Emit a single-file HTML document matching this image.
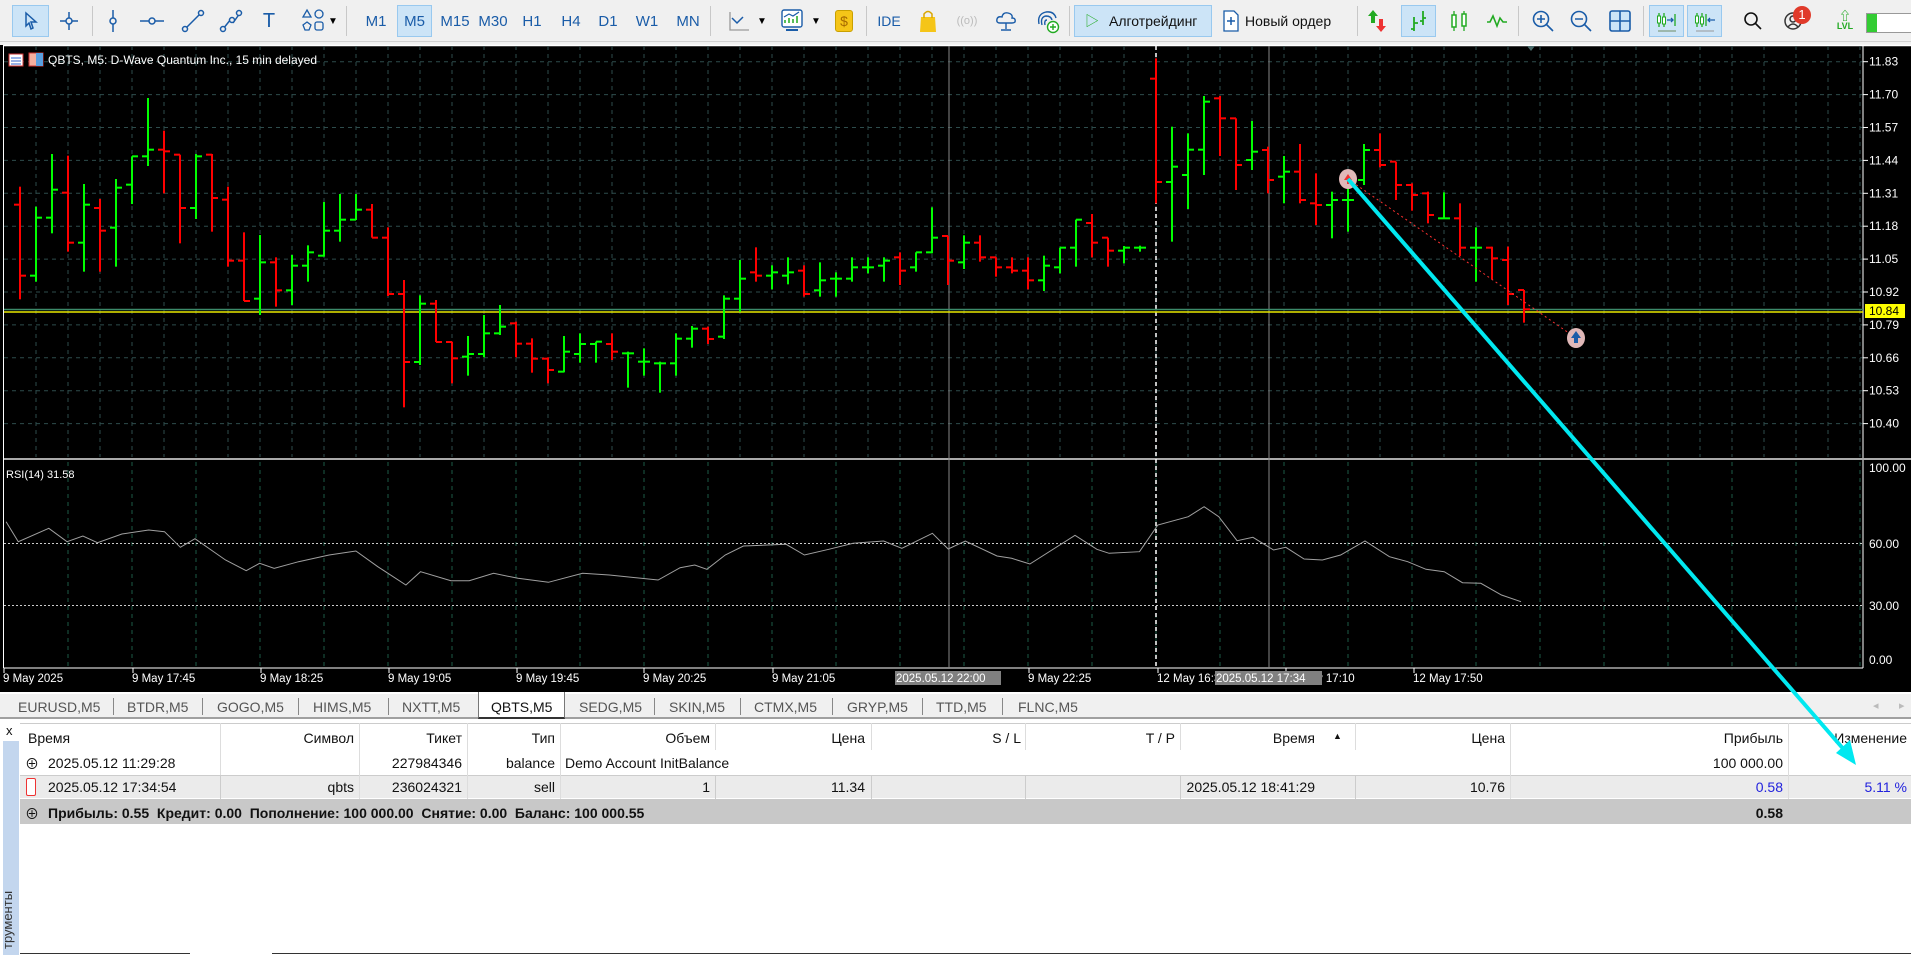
<!DOCTYPE html>
<html><head><meta charset="utf-8">
<style>
*{margin:0;padding:0;box-sizing:border-box}
body{width:1911px;height:955px;overflow:hidden;background:#fff;font-family:"Liberation Sans","Noto Sans CJK SC",sans-serif;position:relative}
#tb{position:absolute;left:0;top:0;width:1911px;height:42px;background:#f0f0f0;border-bottom:1px solid #d0d0d0}
#tb .i{position:absolute;top:0;height:42px;display:flex;align-items:center;justify-content:center;font-size:15px;color:#1a5ca8}
.sel{background:#cce4f7;border:1px solid #99c9ef}
.sep{position:absolute;top:6px;width:1px;height:30px;background:#c8c8c8}
#chart{position:absolute;left:0;top:42px}
#ov{position:absolute;left:0;top:0;z-index:10;pointer-events:none}
#tabs{position:absolute;left:0;top:692px;width:1911px;height:27px;background:#f0f0f0;border-top:2px solid #fff;border-bottom:2px solid #a0a0a0}
#tabs span{position:absolute;top:5px;font-size:14px;color:#555}
#tabs i{position:absolute;top:4px;width:1px;height:17px;background:#888}
#tbl{position:absolute;left:0;top:721px;width:1911px;height:234px;background:#fff}
.c{position:absolute;font-size:14px;color:#111;white-space:nowrap}
.r{text-align:right}
.vs{position:absolute;width:1px;background:#ddd}
</style></head><body>
<div id="tb">
  <div class="i sel" style="left:12px;width:37px;top:5px;height:32px"><svg width="20" height="20" viewBox="0 0 20 20"><path d="M5 2 L15 11 L10 11 L12 17 L10 18 L8 12 L5 15 Z" fill="none" stroke="#1a5ca8" stroke-width="1.5"/></svg></div>
  <div class="i" style="left:56px;width:26px"><svg width="22" height="22"><path d="M11 2V20M2 11H20" stroke="#1a5ca8" stroke-width="1.5"/><circle cx="11" cy="11" r="3" fill="#f0f0f0" stroke="#1a5ca8" stroke-width="1.5"/></svg></div>
  <div class="sep" style="left:92px"></div>
  <div class="i" style="left:103px;width:20px"><svg width="12" height="24"><path d="M6 1V23" stroke="#1a5ca8" stroke-width="1.5"/><circle cx="6" cy="12" r="3" fill="#f0f0f0" stroke="#1a5ca8" stroke-width="1.5"/></svg></div>
  <div class="i" style="left:140px;width:24px"><svg width="24" height="12"><path d="M0 6H24" stroke="#1a5ca8" stroke-width="1.5"/><circle cx="12" cy="6" r="3" fill="#f0f0f0" stroke="#1a5ca8" stroke-width="1.5"/></svg></div>
  <div class="i" style="left:180px;width:26px"><svg width="24" height="24"><path d="M3 21L21 3" stroke="#1a5ca8" stroke-width="1.5"/><circle cx="4" cy="20" r="2.5" fill="#f0f0f0" stroke="#1a5ca8" stroke-width="1.5"/><circle cx="20" cy="4" r="2.5" fill="#f0f0f0" stroke="#1a5ca8" stroke-width="1.5"/></svg></div>
  <div class="i" style="left:218px;width:26px"><svg width="24" height="24"><path d="M4 20L12 10M14 14L21 4" stroke="#1a5ca8" stroke-width="1.5"/><circle cx="4" cy="20" r="2.5" fill="#f0f0f0" stroke="#1a5ca8" stroke-width="1.5"/><circle cx="13" cy="11" r="2.5" fill="#f0f0f0" stroke="#1a5ca8" stroke-width="1.5"/><circle cx="20" cy="4" r="2.5" fill="#f0f0f0" stroke="#1a5ca8" stroke-width="1.5"/></svg></div>
  <div class="i" style="left:259px;width:20px;font-size:20px;color:#1a5ca8">T</div>
  <div class="i" style="left:298px;width:30px"><svg width="24" height="26"><path d="M6 2L10 9H2Z" fill="none" stroke="#1a5ca8" stroke-width="1.3"/><circle cx="18" cy="6" r="4" fill="none" stroke="#1a5ca8" stroke-width="1.3"/><path d="M6 14L10 17L8 22H4L2 17Z" fill="none" stroke="#1a5ca8" stroke-width="1.3"/><rect x="14" y="14" width="8" height="8" rx="2" fill="none" stroke="#1a5ca8" stroke-width="1.3"/></svg></div>
  <div class="i" style="left:328px;width:10px;font-size:10px;color:#000">▼</div>
  <div class="sep" style="left:346px"></div>
  <div class="i" style="left:365px;width:22px">M1</div>
  <div class="i sel" style="left:397px;width:35px;top:5px;height:32px">M5</div>
  <div class="i" style="left:440px;width:30px">M15</div>
  <div class="i" style="left:478px;width:30px">M30</div>
  <div class="i" style="left:522px;width:20px">H1</div>
  <div class="i" style="left:561px;width:20px">H4</div>
  <div class="i" style="left:598px;width:20px">D1</div>
  <div class="i" style="left:636px;width:22px">W1</div>
  <div class="i" style="left:676px;width:24px">MN</div>
  <div class="sep" style="left:710px"></div>
  <div class="i" style="left:728px;width:22px"><svg width="22" height="22"><path d="M2 2V20H21" stroke="#999" stroke-width="1.3" fill="none"/><path d="M4 8L9 13L15 7" stroke="#1a5ca8" stroke-width="1.5" fill="none"/></svg></div>
  <div class="i" style="left:757px;width:10px;font-size:10px;color:#000">▼</div>
  <div class="i" style="left:780px;width:24px"><svg width="24" height="26"><rect x="2" y="2" width="20" height="17" rx="2" fill="#fff" stroke="#1a5ca8" stroke-width="1.4"/><path d="M5 15V12M9 15V10M13 15V11M17 15V8" stroke="#2a2" stroke-width="1.5"/><path d="M4 9L9 6L13 8L19 4" stroke="#1a5ca8" stroke-width="1.2" fill="none"/><path d="M6 22H18" stroke="#1a5ca8" stroke-width="2"/></svg></div>
  <div class="i" style="left:811px;width:10px;font-size:10px;color:#000">▼</div>
  <div class="i" style="left:834px;width:20px"><div style="width:18px;height:22px;background:#f5c518;border:1px solid #c9a000;border-radius:3px;color:#a66a00;font-size:14px;text-align:center;line-height:20px">$</div></div>
  <div class="sep" style="left:866px"></div>
  <div class="i" style="left:877px;width:24px;font-size:14px">IDE</div>
  <div class="i" style="left:918px;width:20px"><svg width="18" height="24"><path d="M2 8H16L17 23H1Z" fill="#f5c518"/><path d="M5 9V5Q9 0 13 5V9" stroke="#d9a500" stroke-width="1.5" fill="none"/></svg></div>
  <div class="i" style="left:956px;width:22px;color:#bbb;font-size:11px">((o))</div>
  <div class="i" style="left:994px;width:24px"><svg width="24" height="24"><path d="M6 14Q2 14 3 10Q4 7 8 8Q9 3 14 4Q19 5 18 9Q22 9 21 13Q20 14 18 14Z" fill="none" stroke="#1a5ca8" stroke-width="1.4"/><path d="M12 14V20M7 21H17" stroke="#1a5ca8" stroke-width="1.4"/></svg></div>
  <div class="i" style="left:1035px;width:26px"><svg width="26" height="26"><path d="M4 16Q2 6 11 4Q19 3 21 10M7 17Q5 9 11 8Q16 8 17 12M10 17Q9 12 12 12" fill="none" stroke="#1a5ca8" stroke-width="1.4"/><circle cx="18" cy="19" r="5.5" fill="#fff" stroke="#2a2" stroke-width="1.4"/><path d="M18 16V22M15 19H21" stroke="#2a2" stroke-width="1.4"/></svg></div>
  <div class="sep" style="left:1069px"></div>
  <div class="i sel" style="left:1074px;width:138px;top:5px;height:32px;color:#111;font-size:14px;justify-content:flex-start;padding-left:10px"><span style="color:#2a2;font-size:14px;margin-right:10px">▷</span>Алготрейдинг</div>
  <div class="i" style="left:1223px;width:125px;color:#111;font-size:14px;justify-content:flex-start"><svg width="16" height="22" style="margin-right:6px"><path d="M1 1H11L15 5V21H1Z" fill="#fff" stroke="#1a5ca8" stroke-width="1.3"/><path d="M8 7V15M4 11H12" stroke="#1a5ca8" stroke-width="1.5"/></svg>Новый ордер</div>
  <div class="sep" style="left:1357px"></div>
  <div class="i" style="left:1366px;width:22px"><svg width="20" height="24"><path d="M6 1L1 7H4V14H8V7H11Z" fill="#2a2"/><path d="M14 23L9 17H12V10H16V17H19Z" fill="#e33"/></svg></div>
  <div class="i sel" style="left:1401px;width:35px;top:5px;height:32px"><svg width="20" height="24"><path d="M5 8V22M9 14H5M2 20H5M14 2V16M14 9H17M11 12H14" stroke="#2a2" stroke-width="1.8" fill="none"/></svg></div>
  <div class="i" style="left:1448px;width:22px"><svg width="20" height="24"><path d="M5 2V22M15 2V22" stroke="#2a2" stroke-width="1.3"/><rect x="3" y="6" width="4" height="12" fill="#fff" stroke="#2a2" stroke-width="1.5"/><rect x="13" y="5" width="4" height="12" fill="#fff" stroke="#2a2" stroke-width="1.5"/></svg></div>
  <div class="i" style="left:1485px;width:24px"><svg width="22" height="14"><path d="M1 8H4L7 2L11 12L14 4L17 8H21" stroke="#2a2" stroke-width="1.6" fill="none"/></svg></div>
  <div class="sep" style="left:1518px"></div>
  <div class="i" style="left:1530px;width:26px"><svg width="24" height="24"><circle cx="10" cy="10" r="7.5" fill="none" stroke="#1a5ca8" stroke-width="1.6"/><path d="M15.5 15.5L22 22M10 6V14M6 10H14" stroke="#1a5ca8" stroke-width="1.6"/></svg></div>
  <div class="i" style="left:1568px;width:26px"><svg width="24" height="24"><circle cx="10" cy="10" r="7.5" fill="none" stroke="#1a5ca8" stroke-width="1.6"/><path d="M15.5 15.5L22 22M6 10H14" stroke="#1a5ca8" stroke-width="1.6"/></svg></div>
  <div class="i" style="left:1608px;width:24px"><svg width="22" height="22"><rect x="1" y="1" width="20" height="20" rx="2" fill="#cce4f7" stroke="#1a5ca8" stroke-width="1.6"/><path d="M11 1V21M1 11H21" stroke="#1a5ca8" stroke-width="1.6"/></svg></div>
  <div class="sep" style="left:1643px"></div>
  <div class="i sel" style="left:1649px;width:35px;top:5px;height:32px"><svg width="24" height="24"><path d="M4 4V18M9 4V18M20 5V17M3 22H21" stroke="#2a2" stroke-width="1.3"/><rect x="2.5" y="7" width="3" height="7" fill="#fff" stroke="#2a2"/><rect x="7.5" y="8" width="3" height="7" fill="#fff" stroke="#2a2"/><path d="M12 11H18M16 9L18 11L16 13" stroke="#1a5ca8" stroke-width="1.3" fill="none"/><path d="M3 22H21" stroke="#999"/></svg></div>
  <div class="i sel" style="left:1687px;width:35px;top:5px;height:32px"><svg width="24" height="24"><path d="M4 4V18M9 4V18M13 5V17" stroke="#2a2" stroke-width="1.3"/><rect x="2.5" y="7" width="3" height="7" fill="#fff" stroke="#2a2"/><rect x="7.5" y="8" width="3" height="7" fill="#fff" stroke="#2a2"/><path d="M15 11H22M17 9L15 11L17 13" stroke="#1a5ca8" stroke-width="1.3" fill="none"/><path d="M3 22H21" stroke="#999"/></svg></div>
  <div class="i" style="left:1742px;width:22px"><svg width="20" height="20"><circle cx="8" cy="8" r="6" fill="none" stroke="#111" stroke-width="1.6"/><path d="M12.5 12.5L18 18" stroke="#111" stroke-width="1.6"/></svg></div>
  <div class="i" style="left:1782px;width:24px"><svg width="22" height="22"><circle cx="10" cy="11" r="8" fill="none" stroke="#333" stroke-width="1.5"/><circle cx="10" cy="9" r="3" fill="none" stroke="#333" stroke-width="1.5"/><path d="M5 17Q10 11 15 17" fill="none" stroke="#333" stroke-width="1.5"/></svg></div>
  <div style="position:absolute;left:1793px;top:6px;width:18px;height:18px;border-radius:9px;background:#e03a2a;color:#fff;font-size:13px;text-align:center;line-height:18px">1</div>
  <div class="i" style="left:1834px;width:22px;flex-direction:column;color:#2a2;font-size:9px;font-weight:bold"><span style="font-size:12px;line-height:10px">⇧</span>LVL</div>
  <div style="position:absolute;left:1866px;top:13px;width:46px;height:20px;background:#fff;border:1px solid #999"><div style="width:10px;height:18px;background:#3c3"></div></div>
</div>

<svg id="chart" width="1911" height="650" viewBox="0 42 1911 650"></svg>

<div id="tabs">
  <span style="left:18px">EURUSD,M5</span><i style="left:113px"></i>
  <span style="left:127px">BTDR,M5</span><i style="left:202px"></i>
  <span style="left:217px">GOGO,M5</span><i style="left:298px"></i>
  <span style="left:313px">HIMS,M5</span><i style="left:388px"></i>
  <span style="left:402px">NXTT,M5</span>
  <div style="position:absolute;left:478px;top:-2px;width:87px;height:27px;background:#fff;border:1px solid #777;border-top:none;border-bottom:2px solid #333"></div>
  <span style="left:491px;color:#111">QBTS,M5</span>
  <span style="left:579px">SEDG,M5</span><i style="left:654px"></i>
  <span style="left:669px">SKIN,M5</span><i style="left:740px"></i>
  <span style="left:754px">CTMX,M5</span><i style="left:832px"></i>
  <span style="left:847px">GRYP,M5</span><i style="left:922px"></i>
  <span style="left:936px">TTD,M5</span><i style="left:1002px"></i>
  <span style="left:1018px">FLNC,M5</span>
  <span style="left:1873px;color:#bbb;font-size:11px">◂</span><span style="left:1899px;color:#bbb;font-size:11px">▸</span>
</div>

<div id="tbl">
  <div style="position:absolute;left:3px;top:20px;width:16px;height:214px;background:#c3d6ee"></div>
  <div class="c" style="left:6px;top:2px;font-size:13px">x</div>
  <div style="position:absolute;left:0px;top:228px;transform:rotate(-90deg);transform-origin:left top;font-size:13px;color:#333;white-space:nowrap">трументы</div>
  <div style="position:absolute;left:20px;top:2px;width:1891px;height:1px;background:#ccc"></div>
  <div style="position:absolute;left:20px;top:54px;width:1891px;height:23px;background:#ebebeb;border-top:1px solid #ccc"></div>
  <div style="position:absolute;left:20px;top:78px;width:1891px;height:25px;background:#c8c8c8"></div>
  <div style="position:absolute;left:20px;top:232px;width:170px;height:1px;background:#333"></div>
  <div style="position:absolute;left:272px;top:232px;width:1639px;height:1px;background:#333"></div>
  <div class="vs" style="left:220px;top:2px;height:52px"></div><div class="vs" style="left:359px;top:2px;height:76px"></div>
  <div class="vs" style="left:467px;top:2px;height:76px"></div><div class="vs" style="left:560px;top:2px;height:76px"></div>
  <div class="vs" style="left:715px;top:2px;height:27px"></div><div class="vs" style="left:871px;top:2px;height:27px"></div>
  <div class="vs" style="left:1025px;top:2px;height:27px"></div><div class="vs" style="left:1180px;top:2px;height:27px"></div>
  <div class="vs" style="left:1355px;top:2px;height:27px"></div><div class="vs" style="left:1510px;top:2px;height:76px"></div>
  <div class="vs" style="left:1788px;top:2px;height:76px"></div>
  <div class="vs" style="left:220px;top:54px;height:24px;background:#ccc"></div>
  <div class="vs" style="left:715px;top:54px;height:24px;background:#ccc"></div><div class="vs" style="left:871px;top:54px;height:24px;background:#ccc"></div>
  <div class="vs" style="left:1025px;top:54px;height:24px;background:#ccc"></div><div class="vs" style="left:1180px;top:54px;height:24px;background:#ccc"></div><div class="vs" style="left:1355px;top:54px;height:24px;background:#ccc"></div>
  <div class="c" style="left:28px;top:9px">Время</div>
  <div class="c r" style="right:1557px;top:9px">Символ</div>
  <div class="c r" style="right:1449px;top:9px">Тикет</div>
  <div class="c r" style="right:1356px;top:9px">Тип</div>
  <div class="c r" style="right:1201px;top:9px">Объем</div>
  <div class="c r" style="right:1046px;top:9px">Цена</div>
  <div class="c r" style="right:890px;top:9px">S / L</div>
  <div class="c r" style="right:736px;top:9px">T / P</div>
  <div class="c r" style="right:596px;top:9px">Время</div>
  <div class="c" style="left:1333px;top:10px;font-size:9px">▲</div>
  <div class="c r" style="right:406px;top:9px">Цена</div>
  <div class="c r" style="right:128px;top:9px">Прибыль</div>
  <div class="c r" style="right:4px;top:9px">Изменение</div>
  <div class="c" style="left:25px;top:33px">⊕</div>
  <div class="c" style="left:48px;top:34px">2025.05.12 11:29:28</div>
  <div class="c r" style="right:1449px;top:34px">227984346</div>
  <div class="c r" style="right:1356px;top:34px">balance</div>
  <div class="c" style="left:565px;top:34px">Demo Account InitBalance</div>
  <div class="c r" style="right:128px;top:34px">100 000.00</div>
  <div style="position:absolute;left:26px;top:57px;width:10px;height:18px;border:1.5px solid #e33;border-radius:2px;background:#fff"></div>
  <div class="c" style="left:48px;top:58px">2025.05.12 17:34:54</div>
  <div class="c r" style="right:1557px;top:58px">qbts</div>
  <div class="c r" style="right:1449px;top:58px">236024321</div>
  <div class="c r" style="right:1356px;top:58px">sell</div>
  <div class="c r" style="right:1201px;top:58px">1</div>
  <div class="c r" style="right:1046px;top:58px">11.34</div>
  <div class="c r" style="right:596px;top:58px">2025.05.12 18:41:29</div>
  <div class="c r" style="right:406px;top:58px">10.76</div>
  <div class="c r" style="right:128px;top:58px;color:#22d">0.58</div>
  <div class="c r" style="right:4px;top:58px;color:#22d">5.11 %</div>
  <div class="c" style="left:25px;top:83px">⊕</div>
  <div class="c" style="left:48px;top:84px;font-weight:bold">Прибыль: 0.55&nbsp; Кредит: 0.00&nbsp; Пополнение: 100 000.00&nbsp; Снятие: 0.00&nbsp; Баланс: 100 000.55</div>
  <div class="c r" style="right:128px;top:84px;font-weight:bold">0.58</div>
</div>

<svg id="ov" width="1911" height="955">
  <line x1="1348" y1="179" x2="1846" y2="752" stroke="#00e8f0" stroke-width="4"/>
  <path d="M1856 765L1836 753L1850 740Z" fill="#00e8f0"/>
</svg>

<script>
var S=document.getElementById('chart'),h='';
function L(x1,y1,x2,y2,c,w,d){h+='<line x1="'+x1+'" y1="'+y1+'" x2="'+x2+'" y2="'+y2+'" stroke="'+c+'" stroke-width="'+(w||1)+'"'+(d?' stroke-dasharray="'+d+'"':'')+'/>';}
function T(x,y,t,c,s,a){h+='<text x="'+x+'" y="'+y+'" fill="'+c+'" font-size="'+(s||12)+'" font-family="Liberation Sans, sans-serif"'+(a?' text-anchor="'+a+'"':'')+'>'+t+'</text>';}
h+='<rect x="0" y="42" width="1911" height="650" fill="#000"/>';
h+='<rect x="0" y="42" width="1911" height="3" fill="#f0f0f0"/>';
L(4,45.5,1911,45.5,'#fff',1.5);L(3.5,45,3.5,668,'#fff',1);
for(var x=36;x<1863;x+=32)L(x,46,x,457,'#2e4c4c',1,'4 4');
var pr=['11.83','11.70','11.57','11.44','11.31','11.18','11.05','10.92','10.79','10.66','10.53','10.40'];
for(var k=0;k<12;k++){var y=61.7+32.9*k;L(4,y,1863,y,'#2e4c4c',1,'4 4');L(1863,y,1868,y,'#fff');T(1869,y+4,pr[k],'#fff',12);}
for(var x=68;x<1863;x+=64)L(x,462,x,666,'#1d5a46',1,'4 4');
L(4,543.5,1863,543.5,'#ccc',1,'2 2');L(4,605.5,1863,605.5,'#ccc',1,'2 2');
L(1863,46,1863,668,'#fff');L(4,459,1911,459,'#aaa',2);L(4,668,1863,668,'#fff');
T(1869,472,'100.00','#fff',12);T(1869,548,'60.00','#fff',12);T(1869,610,'30.00','#fff',12);T(1869,664,'0.00','#fff',12);
L(949,46,949,668,'#888');L(1269,46,1269,668,'#888');L(1156,46,1156,668,'#fff',1.5,'4 3');
L(4,309.5,1863,309.5,'#3c8a6a',1.5);L(4,312,1863,312,'#e8e800',1.5);
h+='<rect x="1865" y="304" width="40" height="14" fill="#ffff00"/>';T(1869,315,'10.84','#000',12);
var B=[[494,707,440,778],[707,533,500,725],[533,449,342,580],[458,608,347,635],[608,494,432,695],[504,572,477,695],[563,443,417,680],[434,349,349,492],[349,329,174,378],[329,334,272,460],[344,504,344,610],[504,349,342,537],[344,474,342,575],[479,662,440,680],[662,783,577,783],[776,667,585,825],[667,751,652,800],[751,677,645,795],[677,637,616,725],[647,572,486,650],[572,539,462,605],[539,509,462,540],[509,593,492,593],[593,762,562,768],[762,966,720,1102],[966,791,766,975],[791,906,780,906],[906,955,905,1030],[950,942,888,1007],[942,880,825,952],[880,860,795,885],[850,911,845,952],[911,956,895,998],[956,990,952,1030],[995,935,888,997],[942,912,880,968],[912,905,905,968],[912,935,880,960],[940,940,935,1043],[965,965,925,1007],[970,970,965,1058],[970,896,880,1007],[896,866,858,923],
[866,897,860,912],[890,776,766,897],[776,716,660,815],[697,707,622,725],[707,697,676,748],[707,697,652,733],[692,762,676,770],[751,721,667,770],[716,716,697,770],[716,682,652,725],[682,682,652,700],[677,662,652,725],[652,692,637,735],[682,637,637,695],[637,593,502,640],[588,662,588,735],[667,608,586,687],[608,652,586,665],[652,682,652,710],[682,692,652,700],[692,721,652,748],[721,677,647,753],[682,623,623,700],[623,539,539,680],[549,608,522,652],[593,632,593,680],[632,623,618,670],[623,623,617,635],
[116,426,55,490],[426,380,260,605],[405,329,280,507],[329,185,168,405],[175,235,168,348],[235,375,235,450],[360,335,243,390],[330,420,320,460],[410,395,348,490],[395,480,312,490],[490,495,400,555],[495,480,455,595],[480,480,400,575],[420,330,312,435],[330,375,280,382],[365,435,365,480],[435,465,430,512],[460,525,455,550],[535,535,457,535],[535,623,490,648],[623,623,562,725],[623,655,620,718],[660,762,620,795],[750,808,750,848]];
for(var i=0;i<B.length;i++){var b=B[i],x=20+16*i,o=b[0]/3+40,c=b[1]/3+40,hi=b[2]/3+40,lo=b[3]/3+40;
var col=(c<=o)?'#00ff00':'#ff0000';if(i==71)col='#ff0000';
L(x,hi,x,lo,col,2);L(x-6,o,x,o,col,2);L(x,c,x+6,c,col,2);}
var R=[[5,185],[15,245],[40,205],[55,245],[68,228],[80,248],[100,222],[122,210],[135,215],[148,262],[160,236],[185,300],[202,332],[213,310],[225,325],[245,305],[270,285],[292,273],[310,320],[333,375],[345,335],[370,362],[385,362],[405,340],[425,355],[450,367],[478,340],[500,345],[540,360],[558,323],[570,315],[580,328],[595,285],[610,258],[645,253],[660,285],[680,268],[700,250],[725,243],[740,265],[765,220],[778,267],[792,243],[818,288],[830,295],[845,312],[882,226],[900,268],[910,280],[935,275],[950,195],[975,170],[988,140],[1000,170],[1015,242],[1028,232],[1045,270],[1055,262],[1070,297],[1085,300],[1100,285],[1120,243],[1140,290],[1155,305],[1170,328],[1185,335],[1200,368],[1215,370],[1232,405],[1248,425]];
h+='<polyline fill="none" stroke="#a0a0a0" stroke-width="1" points="'+R.map(function(p){return (p[0]/0.8205).toFixed(1)+','+(p[1]/3+460).toFixed(1)}).join(' ')+'"/>';
T(6,478,'RSI(14) 31.58','#fff',11);
h+='<rect x="9" y="54" width="14" height="12" fill="#fff" stroke="#c33"/><path d="M11 58H21M11 61H21M11 64H21" stroke="#36c" stroke-width="1"/>';
h+='<rect x="29" y="53" width="14" height="13" fill="#f4b0a0" stroke="#c33"/><rect x="36" y="53" width="7" height="13" fill="#5aa0e0"/>';
T(48,64,'QBTS, M5:  D-Wave Quantum Inc., 15 min delayed','#fff',12);
h+='<path d="M1527 46L1535 46L1531 51Z" fill="#4a6a6a"/>';
L(1348,179,1576,338,'#ff3030',1,'2 3');
h+='<ellipse cx="1348" cy="179" rx="9" ry="10" fill="#e0b8b8"/><path d="M1348 174L1344 180H1352Z" fill="#e33"/><path d="M1348 184V176" stroke="#e33" stroke-width="2"/>';
h+='<ellipse cx="1576" cy="338" rx="9" ry="10" fill="#e0b8b8"/><path d="M1576 331L1571 338H1574V343H1578V338H1581Z" fill="#1a5ca8"/>';
var TL=[[3,'9 May 2025'],[132,'9 May 17:45'],[260,'9 May 18:25'],[388,'9 May 19:05'],[516,'9 May 19:45'],[643,'9 May 20:25'],[772,'9 May 21:05'],[1028,'9 May 22:25'],[1157,'12 May 16:30'],[1285,'12 May 17:10'],[1413,'12 May 17:50']];
TL.forEach(function(t){L(t[0]+1,668,t[0]+1,673,'#fff');T(t[0],682,t[1],'#fff',11.5);});
h+='<rect x="895" y="671" width="106" height="14" fill="#808080"/>';T(896,682,'2025.05.12 22:00','#fff',11.5);
h+='<rect x="1215" y="671" width="107" height="14" fill="#808080"/>';T(1216,682,'2025.05.12 17:34','#fff',11.5);
S.innerHTML=h;
</script>
</body></html>
